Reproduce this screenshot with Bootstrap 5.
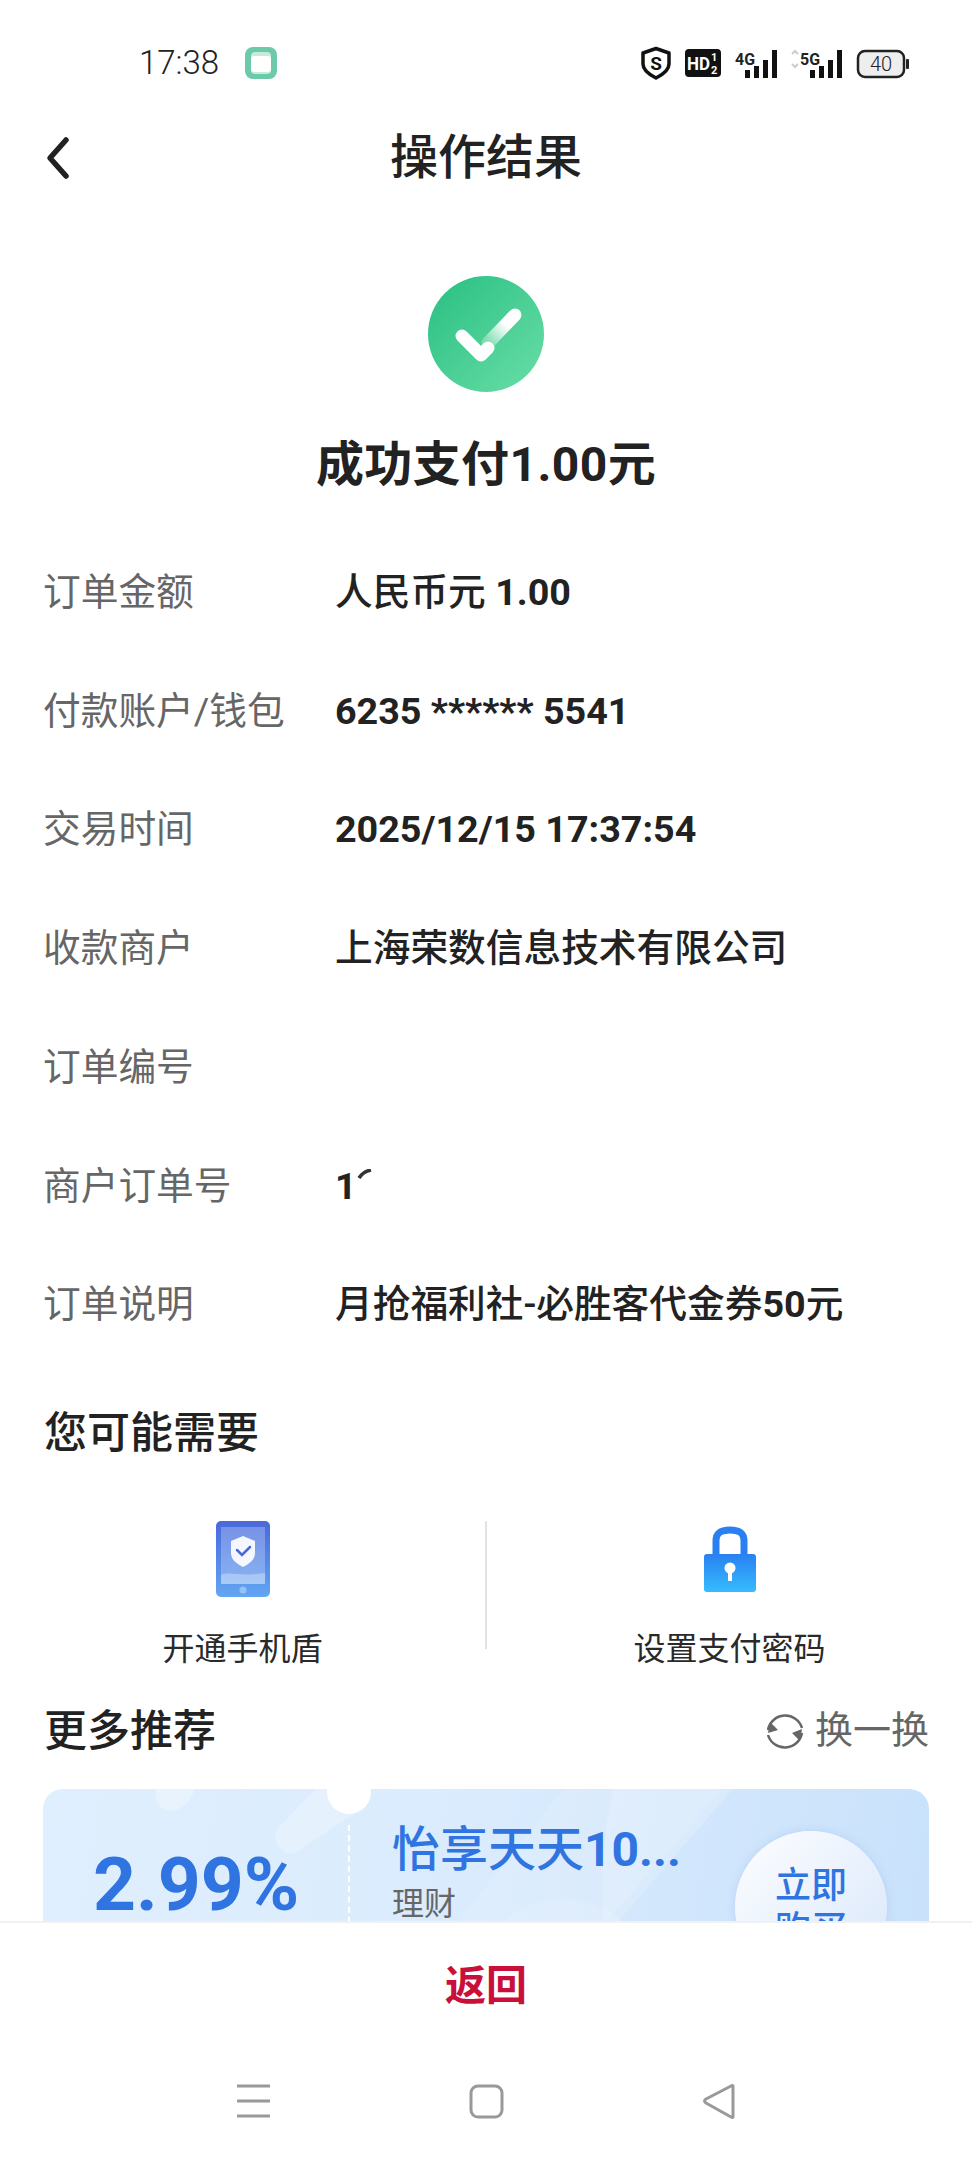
<!DOCTYPE html>
<html lang="zh-CN">
<head>
  <meta charset="UTF-8">
  <title>操作结果</title>
  <meta name="viewport" content="width=device-width, initial-scale=1">
  <link href="https://cdn.jsdelivr.net/npm/bootstrap@5.3.0/dist/css/bootstrap.min.css" rel="stylesheet">
  <style>
    html, body { height: 2160px; overflow: hidden; }
    body {
      background: #fff;
      color: #222;
      font-family: Roboto, "Noto Sans CJK SC", sans-serif;
    }
    .page-wrap { height: 2160px; }
    .scroll-area { height: 1921px; overflow: hidden; }
    .status-row { height: 100px; padding: 25px 62px 0 139px; }
    .status-time { font-size: 33px; font-weight: 300; line-height: 1; color: #222; }
    .app-dot { margin-left: 26px; }
    .top-bar { height: 115px; padding-left: 44px; position: relative; }
    .top-title { position: absolute; left: 0; right: 0; text-align: center; font-size: 48px; font-weight: 500; line-height: 115px; top: 0; }
    .result-box { height: 318px; padding-top: 61px; }
    .result-title { font-size: 48px; font-weight: 700; line-height: 64px; margin-top: 41px; letter-spacing: .4px; }
    .info-row { height: 118.7px; padding: 0 44px; font-size: 37.7px; }
    .info-key { width: 291px; color: #666; flex: none; margin-left: -1px; margin-right: 1px; }
    .info-val { font-weight: 500; color: #222; }
    .sec-title { font-size: 43px; font-weight: 500; line-height: 60px; padding-left: 44px; margin: 39px 0 0; }
    .tools-row { margin-top: 58px; height: 148px; }
    .tool-cell { width: 485px; height: 148px; }
    .tool-line { width: 2px; height: 128px; background: #e2e2e2; flex: none; }
    .tool-icon { height: 76px; flex: none; }
    .tool-text { font-size: 32px; line-height: 40px; margin-top: 32px; color: #2a2a2a; white-space: nowrap; }
    .more-head { padding: 0 43px 0 44px; height: 60px; margin-top: 32px; }
    .more-title { font-size: 43px; font-weight: 500; }
    .swap-text { font-size: 38px; color: #666; margin-left: 10px; }
    .promo-card {
      margin: 28px 43px 0;
      height: 240px;
      border-radius: 20px;
      position: relative;
      overflow: hidden;
      background: linear-gradient(100deg, #e0effe 0%, #d9ebfd 50%, #c8e1fb 100%);
    }
    .promo-deco { position: absolute; left: 0; top: 0; }
    .promo-notch { position: absolute; left: 284px; top: -19px; width: 44px; height: 44px; border-radius: 50%; background: #fff; }
    .promo-dash { position: absolute; left: 305px; top: 36px; height: 200px; border-left: 2px dashed #fff; }
    .promo-inner { position: relative; height: 100%; }
    .promo-rate { width: 306px; padding: 50px 0 0 50px; font-size: 75px; font-weight: 700; color: #2f74e0; line-height: 90px; white-space: nowrap; }
    .promo-mid { padding: 33px 0 0 43px; width: 386px; }
    .promo-name { font-size: 48px; font-weight: 500; color: #2f74e0; line-height: 56px; white-space: nowrap; }
    .promo-type { font-size: 32px; color: #666; line-height: 40px; margin-top: 6px; }
    .promo-btn {
      width: 152px; height: 152px; border-radius: 50%;
      margin-top: 42px;
      background: linear-gradient(135deg, #fdfeff, #d7e6fb);
      box-shadow: 0 0 8px rgba(120,160,230,.25);
      color: #2f74e0; font-size: 36px; font-weight: 500; line-height: 44px;
      text-align: center; padding-top: 33px;
    }
    .foot-bar { height: 239px; background: #fff; border-top: 2px solid #f1f1f1; }
    .back-text { font-size: 41px; font-weight: 700; color: #c8103a; line-height: 50px; padding-top: 38px; text-align: center; height: 159px; }
    .nav-keys { height: 62px; }
    .nav-keys svg { display: block; }
  </style>
</head>
<body>
  <div class="page-wrap d-flex flex-column">
    <div class="scroll-area">

      <!-- status bar -->
      <div class="status-row d-flex align-items-center justify-content-between">
        <div class="d-flex align-items-center">
          <span class="status-time">17:38</span>
          <svg class="app-dot" width="32" height="32" viewBox="0 0 32 32">
            <rect width="32" height="32" rx="8" fill="#6ccaa8"/>
            <rect x="6" y="5" width="20" height="22" rx="4" fill="#c4ebdc"/>
            <rect x="6" y="9" width="20" height="16" rx="3" fill="#fff"/>
          </svg>
        </div>
        <svg width="270" height="34" viewBox="0 0 270 34">
          <path d="M16 2.5 L29 7 V18 C29 25 22 29 16 32 C10 29 3 25 3 18 V7 Z" fill="none" stroke="#111" stroke-width="3.5" stroke-linejoin="round"/>
          <text x="16" y="23.5" text-anchor="middle" font-family="Roboto" font-weight="700" font-size="19" fill="#111">S</text>
          <rect x="45" y="3" width="36" height="28" rx="4" fill="#111"/>
          <text x="47" y="24" font-family="Roboto" font-weight="700" font-size="19" fill="#fff" textLength="23" lengthAdjust="spacingAndGlyphs">HD</text>
          <text x="71" y="15" font-family="Roboto" font-weight="700" font-size="11" fill="#fff">1</text>
          <text x="71" y="28" font-family="Roboto" font-weight="700" font-size="11" fill="#fff">2</text>
          <text x="95" y="19" font-family="Roboto" font-weight="700" font-size="17" fill="#222" textLength="20" lengthAdjust="spacingAndGlyphs">4G</text>
          <g fill="#111"><rect x="105" y="24" width="5" height="8"/><rect x="114" y="20" width="5" height="12"/><rect x="123" y="14" width="5" height="18"/><rect x="132" y="4" width="5" height="28"/></g>
          <path d="M152 8 l3-3 3 3 M152 18 l3 3 3-3" stroke="#ccc" stroke-width="2" fill="none"/>
          <text x="160" y="19" font-family="Roboto" font-weight="700" font-size="17" fill="#222" textLength="20" lengthAdjust="spacingAndGlyphs">5G</text>
          <g fill="#111"><rect x="170" y="24" width="5" height="8"/><rect x="179" y="20" width="5" height="12"/><rect x="188" y="14" width="5" height="18"/><rect x="197" y="4" width="5" height="28"/></g>
          <rect x="218" y="5" width="46" height="26" rx="7" fill="#eee" stroke="#222" stroke-width="2.5"/>
          <rect x="266" y="13" width="3" height="10" rx="1" fill="#222"/>
          <text x="241" y="25" text-anchor="middle" font-family="Roboto" font-weight="300" font-size="20" fill="#222">40</text>
        </svg>
      </div>

      <!-- top bar -->
      <div class="top-bar d-flex align-items-center">
        <div class="top-title">操作结果</div>
        <svg width="28" height="44" viewBox="0 0 28 44">
          <path d="M22 4 L6 22 L22 40" fill="none" stroke="#222" stroke-width="5.5" stroke-linecap="round" stroke-linejoin="round"/>
        </svg>
      </div>

      <!-- result -->
      <div class="result-box text-center">
        <svg width="116" height="116" viewBox="0 0 116 116">
          <defs>
            <linearGradient id="okBg" x1="0.1" y1="0.1" x2="0.9" y2="0.9">
              <stop offset="0" stop-color="#2fc286"/>
              <stop offset="1" stop-color="#63dba3"/>
            </linearGradient>
            <linearGradient id="okArm" gradientUnits="userSpaceOnUse" x1="87" y1="39" x2="60" y2="66">
              <stop offset="0.35" stop-color="#fff"/>
              <stop offset="1" stop-color="#fff" stop-opacity=".3"/>
            </linearGradient>
          </defs>
          <circle cx="58" cy="58" r="58" fill="url(#okBg)"/>
          <path d="M87 39 L60 67" stroke="url(#okArm)" stroke-width="13" stroke-linecap="round" fill="none"/>
          <path d="M34 60 L53 79 L60 72" stroke="#fff" stroke-width="13" stroke-linecap="round" stroke-linejoin="round" fill="none"/>
        </svg>
        <div class="result-title">成功支付1.00元</div>
      </div>

      <!-- order info -->
      <div class="info-row d-flex align-items-center"><span class="info-key">订单金额</span><span class="info-val">人民币元 <b>1.00</b></span></div>
      <div class="info-row d-flex align-items-center"><span class="info-key">付款账户/钱包</span><span class="info-val fw-bold">6235 ****** 5541</span></div>
      <div class="info-row d-flex align-items-center"><span class="info-key">交易时间</span><span class="info-val fw-bold">2025/12/15 17:37:54</span></div>
      <div class="info-row d-flex align-items-center"><span class="info-key">收款商户</span><span class="info-val">上海荣数信息技术有限公司</span></div>
      <div class="info-row d-flex align-items-center"><span class="info-key">订单编号</span><span class="info-val"></span></div>
      <div class="info-row d-flex align-items-center">
        <span class="info-key">商户订单号</span>
        <span class="info-val fw-bold d-flex align-items-start">1<svg width="16" height="12" viewBox="0 0 16 12" style="margin-top:11px"><path d="M2 9 C5 4 9 2 14 1" stroke="#333" stroke-width="3.5" fill="none"/></svg></span>
      </div>
      <div class="info-row d-flex align-items-center"><span class="info-key">订单说明</span><span class="info-val">月抢福利社-必胜客代金券<b>50</b>元</span></div>

      <!-- maybe needed -->
      <h2 class="sec-title">您可能需要</h2>
      <div class="tools-row d-flex">
        <div class="tool-cell d-flex flex-column align-items-center">
          <svg class="tool-icon" width="54" height="76" viewBox="0 0 54 76">
            <defs>
              <linearGradient id="phoneBg" x1="0" y1="0" x2="0" y2="1">
                <stop offset="0" stop-color="#4a68dc"/>
                <stop offset="1" stop-color="#62a6f2"/>
              </linearGradient>
            </defs>
            <rect width="54" height="76" rx="5" fill="url(#phoneBg)"/>
            <rect x="5" y="6" width="44" height="57" fill="#fff" opacity=".25"/>
            <path d="M5 54 C15 50 25 56 49 52 V63 H5 Z" fill="#fff" opacity=".3"/>
            <path d="M27 15 L39 20 V32 C39 39 33 43 27 46 C21 43 15 39 15 32 V20 Z" fill="#f5f7ff"/>
            <path d="M21 29 L26 34 L34 26" stroke="#4a68dc" stroke-width="2.5" fill="none" stroke-linecap="round"/>
            <circle cx="27" cy="69" r="3.5" fill="#fff" opacity=".35"/>
          </svg>
          <div class="tool-text">开通手机盾</div>
        </div>
        <div class="tool-line"></div>
        <div class="tool-cell d-flex flex-column align-items-center">
          <svg class="tool-icon" width="54" height="76" viewBox="0 0 54 76">
            <defs>
              <linearGradient id="lockBg" x1="0" y1="0" x2="0" y2="1">
                <stop offset="0" stop-color="#2a80f0"/>
                <stop offset="1" stop-color="#35bcff"/>
              </linearGradient>
            </defs>
            <path d="M13 36 V20 C13 11 19 9 27 9 C35 9 41 11 41 20 V36" fill="none" stroke="#2a80f0" stroke-width="7"/>
            <rect x="1" y="33" width="52" height="38" rx="3" fill="url(#lockBg)"/>
            <circle cx="27" cy="47" r="5.5" fill="#fff"/>
            <path d="M25 49 H29 V60 H25 Z" fill="#fff"/>
          </svg>
          <div class="tool-text">设置支付密码</div>
        </div>
      </div>

      <!-- recommend -->
      <div class="more-head d-flex align-items-center justify-content-between">
        <span class="more-title">更多推荐</span>
        <span class="d-flex align-items-center">
          <svg width="40" height="40" viewBox="0 0 40 40">
            <path d="M3 19 A17.5 17.5 0 0 1 37 17" fill="none" stroke="#666" stroke-width="2.5"/>
            <path d="M37 22 A17.5 17.5 0 0 1 3 24" fill="none" stroke="#666" stroke-width="2.5"/>
            <path d="M3 22 L5 11 L13 19 Z M37 18 L35 30 L27 22 Z" fill="#666"/>
          </svg>
          <span class="swap-text">换一换</span>
        </span>
      </div>
      <div class="promo-card">
        <svg class="promo-deco" width="886" height="240" viewBox="0 0 886 240">
          <path d="M116 -10 L158 -10 L146 12 Q132 28 118 18 Q108 10 116 -10 Z" fill="#fff" opacity=".3"/>
          <path d="M280 -8 L318 20 L258 60 Q246 70 236 58 Q228 48 236 38 Z" fill="#fff" opacity=".25"/>
          <path d="M520 0 L680 0 L470 240 L330 240 Z" fill="#fff" opacity=".12"/>
          <path d="M570 0 L690 0 L560 150 Q556 60 570 0 Z" fill="#fff" opacity=".16"/>
          <circle cx="520" cy="200" r="90" fill="#fff" opacity=".12"/>
        </svg>
        <div class="promo-notch"></div>
        <div class="promo-dash"></div>
        <div class="promo-inner d-flex">
          <div class="promo-rate">2.99%</div>
          <div class="promo-mid">
            <div class="promo-name">怡享天天<b>10...</b></div>
            <div class="promo-type">理财</div>
          </div>
          <div class="promo-btn">立即<br>购买</div>
        </div>
      </div>
    </div>

    <!-- bottom -->
    <div class="foot-bar">
      <div class="back-text">返回</div>
      <div class="nav-keys">
        <svg width="972" height="40" viewBox="0 0 972 40">
          <g stroke="#999" stroke-width="3" fill="none" stroke-linejoin="round">
            <path d="M237 4 H270 M237 19 H270 M237 34 H270"/>
            <rect x="471" y="4" width="31" height="31" rx="7"/>
            <path d="M733 4 V35 Q733 36 731 35 L706 21 Q703 19 706 17 L731 4 Q733 3 733 4 Z"/>
          </g>
        </svg>
      </div>
    </div>
  </div>
  <script src="https://cdn.jsdelivr.net/npm/bootstrap@5.3.0/dist/js/bootstrap.bundle.min.js"></script>
</body>
</html>
